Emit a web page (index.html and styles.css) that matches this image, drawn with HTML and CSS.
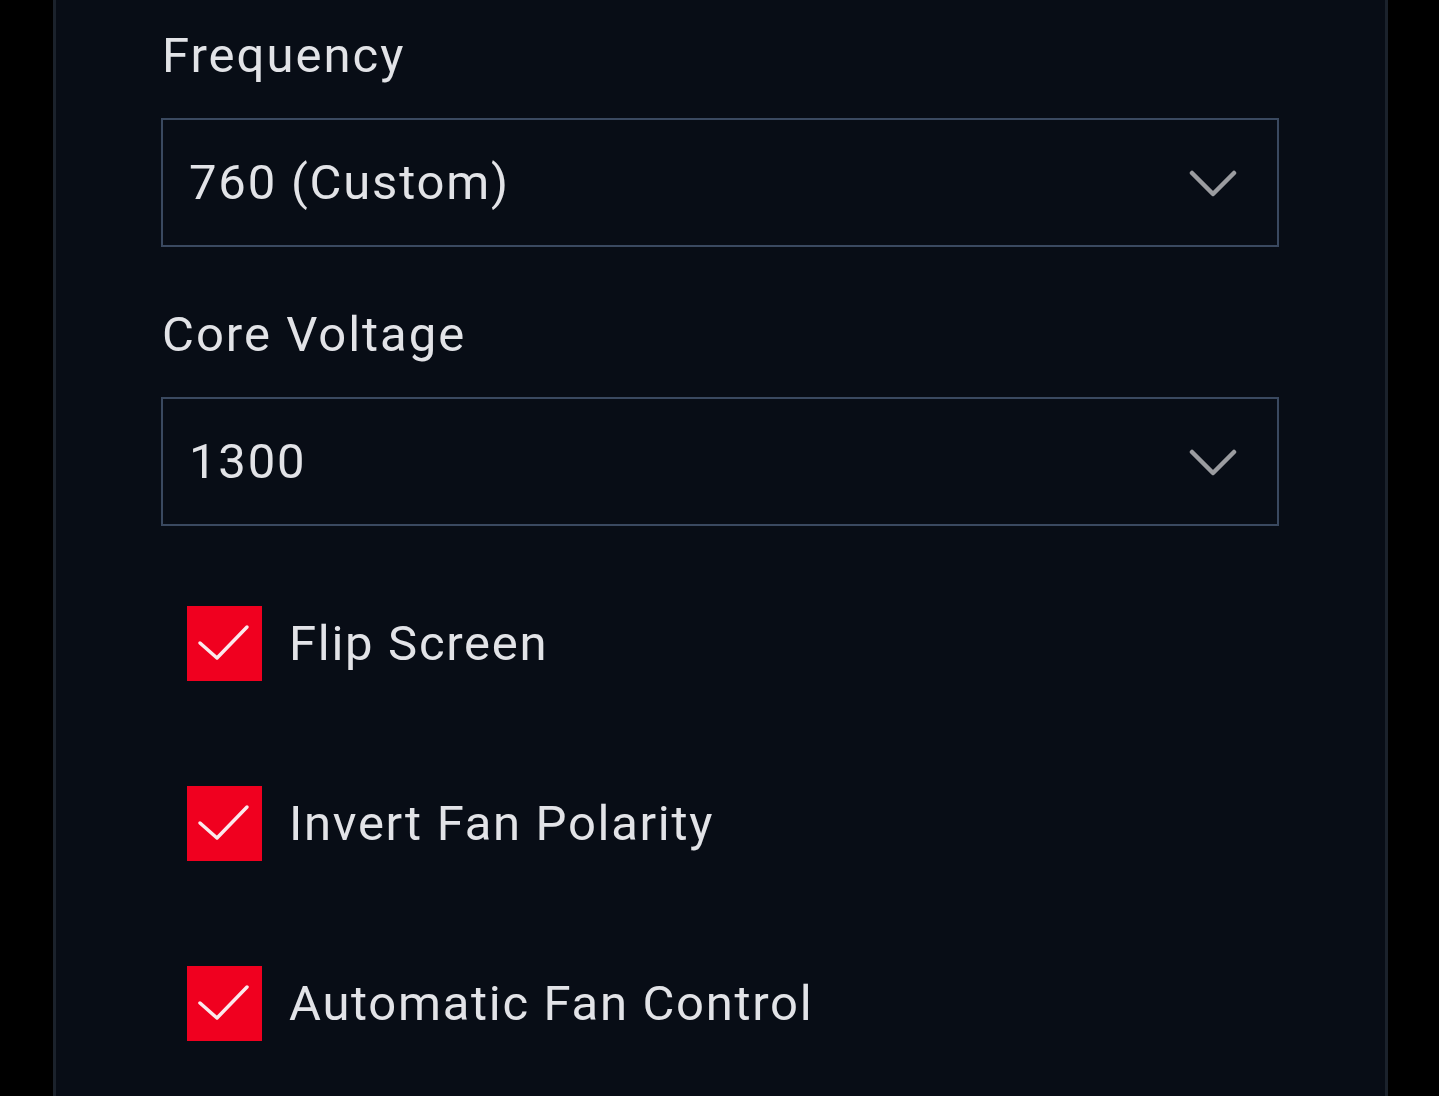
FILE: index.html
```html
<!DOCTYPE html>
<html>
<head>
  <title>Settings</title>
  <link rel="stylesheet" href="styles.css">
</head>
<body>

  <div class="panel">
    <div class="field">
      <label class="field-label">Frequency</label>
      <div class="select">
        <span class="select-value">760 (Custom)</span>
        <svg class="chevron" width="48" height="30" viewBox="0 0 48 30">
          <path d="M3 4 L24 25 L45 4" fill="none" stroke="#9b9ca0" stroke-width="4.5" stroke-linecap="round" stroke-linejoin="round"/>
        </svg>
      </div>
    </div>

    <div class="field">
      <label class="field-label">Core Voltage</label>
      <div class="select">
        <span class="select-value">1300</span>
        <svg class="chevron" width="48" height="30" viewBox="0 0 48 30">
          <path d="M3 4 L24 25 L45 4" fill="none" stroke="#9b9ca0" stroke-width="4.5" stroke-linecap="round" stroke-linejoin="round"/>
        </svg>
      </div>
    </div>

    <div class="checks">
      <div class="check-row">
        <span class="checkbox">
          <svg width="75" height="75" viewBox="0 0 75 75">
            <path d="M13 37 L30 52 L60 21" fill="none" stroke="#fbe9ec" stroke-width="3.5" stroke-linecap="round" stroke-linejoin="round"/>
          </svg>
        </span>
        <span class="check-label">Flip Screen</span>
      </div>
      <div class="check-row">
        <span class="checkbox">
          <svg width="75" height="75" viewBox="0 0 75 75">
            <path d="M13 37 L30 52 L60 21" fill="none" stroke="#fbe9ec" stroke-width="3.5" stroke-linecap="round" stroke-linejoin="round"/>
          </svg>
        </span>
        <span class="check-label">Invert Fan Polarity</span>
      </div>
      <div class="check-row">
        <span class="checkbox">
          <svg width="75" height="75" viewBox="0 0 75 75">
            <path d="M13 37 L30 52 L60 21" fill="none" stroke="#fbe9ec" stroke-width="3.5" stroke-linecap="round" stroke-linejoin="round"/>
          </svg>
        </span>
        <span class="check-label">Automatic Fan Control</span>
      </div>
    </div>
  </div>

</body>
</html>
```

FILE: styles.css
```css
body {
  margin: 0;
  background-color: #000;
  font-family: Roboto, "Liberation Sans", sans-serif;
  color: #e2e3e7;
  overflow: hidden;
}

.panel {
  margin-left: 53px;
  width: 1335px;
  height: 1096px;
  background-color: #080d16;
  border-left: 3px solid #1b222c;
  border-right: 3px solid #1b222c;
  padding: 26px 0 0 105px;
  box-sizing: border-box;
}

.field {
  display: flex;
  flex-direction: column;
  margin-bottom: 58px;
}

.field-label {
  font-size: 49px;
  line-height: 60px;
  letter-spacing: 2px;
  padding-left: 1px;
  margin-bottom: 32px;
}

.select {
  width: 1118px;
  height: 129px;
  box-sizing: border-box;
  border: 2px solid #3a4960;
  display: flex;
  align-items: center;
  justify-content: space-between;
  padding: 0 40px 0 26px;
}

.select-value {
  font-size: 49px;
  letter-spacing: 1.8px;
}

.chevron {
  margin-top: 2px;
}

.checks {
  display: flex;
  flex-direction: column;
  gap: 105px;
  padding-left: 26px;
  margin-top: 80px;
}

.check-row {
  display: flex;
  align-items: center;
  gap: 27px;
}

.checkbox {
  width: 75px;
  height: 75px;
  background-color: #f0001f;
  display: block;
}

.checkbox svg {
  display: block;
}

.check-label {
  font-size: 49px;
  letter-spacing: 1.7px;
}
```
